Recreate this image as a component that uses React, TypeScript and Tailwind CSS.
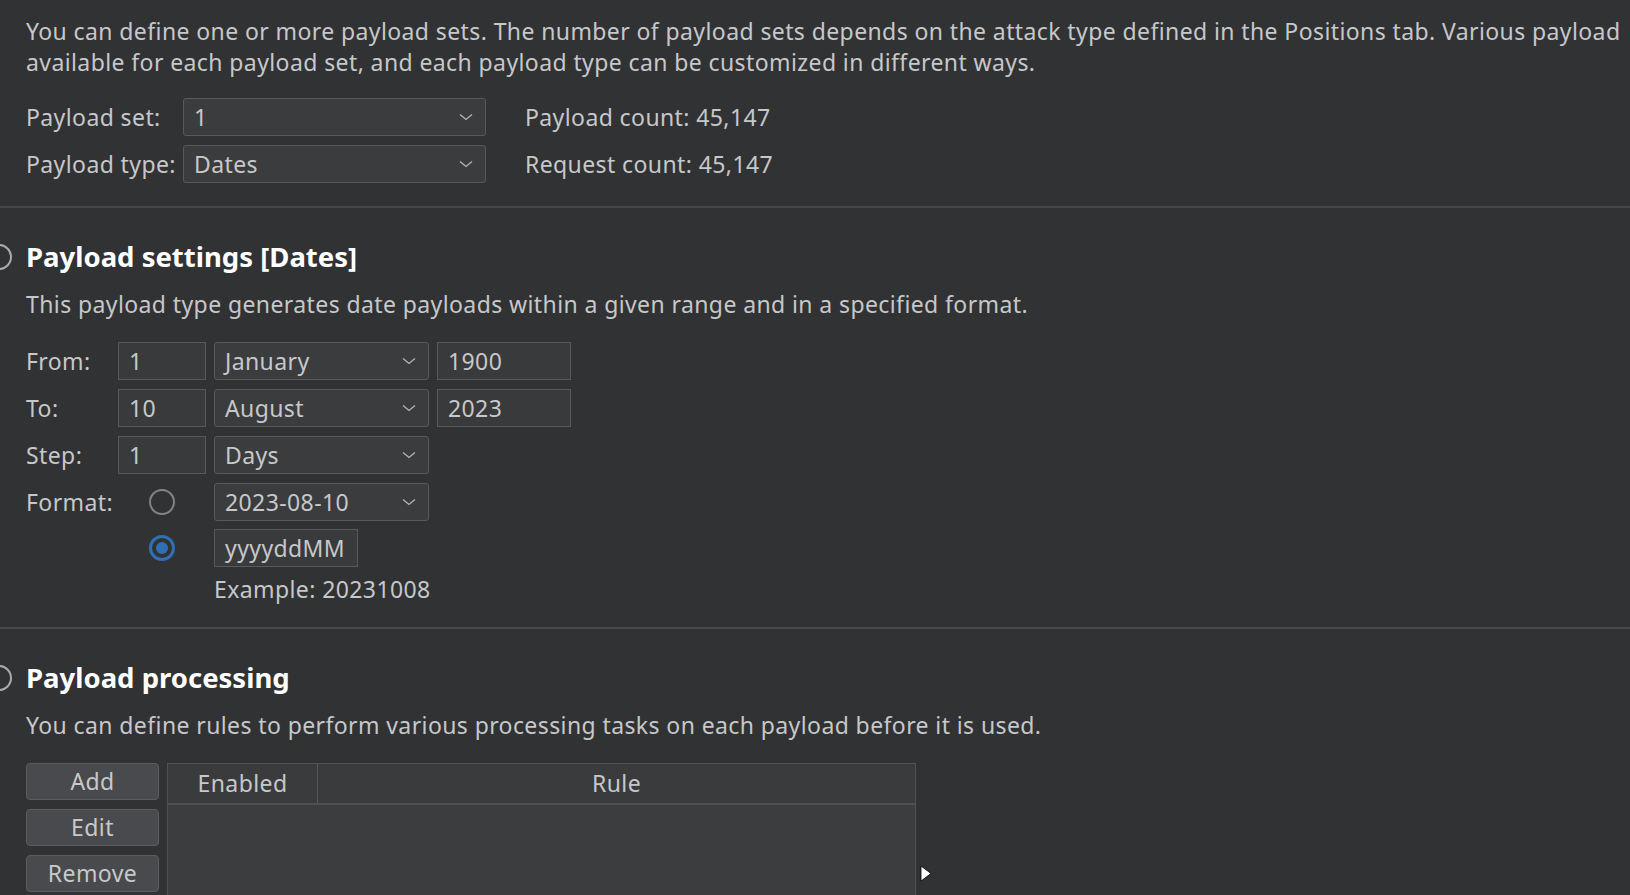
import React from "react";

const font = { fontFamily: '"Noto Sans", "Open Sans", sans-serif' };

function Chevron() {
  return (
    <svg width="14" height="8" viewBox="0 0 14 8" fill="none" className="shrink-0">
      <path d="M1 1.5 L7 6.5 L13 1.5" stroke="#b4b6b8" strokeWidth="1.3" />
    </svg>
  );
}

function Select({ value, width }: { value: string; width: string }) {
  return (
    <div
      className={`flex h-[38px] ${width} items-center justify-between rounded-[3px] border border-[#58595c] bg-[#3b3c3e] pl-[10px] pr-[12px]`}
    >
      <span>{value}</span>
      <Chevron />
    </div>
  );
}

function Field({ value, width }: { value: string; width: string }) {
  return (
    <div className={`flex h-[38px] ${width} items-center border border-[#58595c] bg-[#393a3c] pl-[10px]`}>
      {value}
    </div>
  );
}

function Radio({ checked }: { checked?: boolean }) {
  return checked ? (
    <div className="flex h-[26px] w-[26px] items-center justify-center rounded-full border-[3px] border-[#2f6fb3]">
      <div className="h-[12px] w-[12px] rounded-full bg-[#2f6fb3]" />
    </div>
  ) : (
    <div className="h-[26px] w-[26px] rounded-full border-2 border-[#838486]" />
  );
}

function SectionTitle({ children }: { children: React.ReactNode }) {
  return (
    <div className="flex items-center">
      <div className="-ml-[40px] mr-[14px] h-[26px] w-[26px] shrink-0 rounded-full border-2 border-[#a9abad]" />
      <h2 className="text-[27.5px] font-bold leading-[36px] tracking-normal text-white">{children}</h2>
    </div>
  );
}

function Button({ label }: { label: string }) {
  return (
    <button
      type="button"
      className="flex h-[37px] w-[133px] items-center justify-center rounded-[4px] border border-[#5b5d60] bg-[#484a4d] text-[#c7c9cb]"
    >
      {label}
    </button>
  );
}

export default function App() {
  return (
    <div
      style={font}
      className="relative h-[895px] w-full overflow-hidden bg-[#313234] text-[23px] leading-[31px] tracking-[0.4px] text-[#c6c8ca]"
    >
      {/* payload sets */}
      <section className="pl-[26px] pt-[16px]">
        <p className="whitespace-nowrap">
          You can define one or more payload sets. The number of payload sets depends on the attack type defined in the Positions tab. Various payload
        </p>
        <p className="whitespace-nowrap">
          available for each payload set, and each payload type can be customized in different ways.
        </p>
        <div className="mt-[20px] flex flex-col gap-[9px]">
          <div className="flex items-center">
            <span className="w-[157px]">Payload set:</span>
            <Select value="1" width="w-[303px]" />
            <span className="ml-[39px]">Payload count: 45,147</span>
          </div>
          <div className="flex items-center">
            <span className="w-[157px]">Payload type:</span>
            <Select value="Dates" width="w-[303px]" />
            <span className="ml-[39px]">Request count: 45,147</span>
          </div>
        </div>
      </section>

      <div className="mt-[23px] h-[2px] bg-[#47484b]" />

      {/* payload settings */}
      <section className="pl-[26px] pt-[31px]">
        <SectionTitle>Payload settings [Dates]</SectionTitle>
        <p className="mt-[14px] whitespace-nowrap">
          This payload type generates date payloads within a given range and in a specified format.
        </p>
        <div className="mt-[22px] flex flex-col gap-[9px]">
          <div className="flex items-center gap-[8px]">
            <span className="w-[84px]">From:</span>
            <Field value="1" width="w-[88px]" />
            <Select value="January" width="w-[215px]" />
            <Field value="1900" width="w-[134px]" />
          </div>
          <div className="flex items-center gap-[8px]">
            <span className="w-[84px]">To:</span>
            <Field value="10" width="w-[88px]" />
            <Select value="August" width="w-[215px]" />
            <Field value="2023" width="w-[134px]" />
          </div>
          <div className="flex items-center gap-[8px]">
            <span className="w-[84px]">Step:</span>
            <Field value="1" width="w-[88px]" />
            <Select value="Days" width="w-[215px]" />
          </div>
          <div className="flex items-center gap-[8px]">
            <span className="w-[84px]">Format:</span>
            <div className="flex w-[88px] justify-center">
              <Radio />
            </div>
            <Select value="2023-08-10" width="w-[215px]" />
          </div>
          <div className="-mt-[1px] flex items-center gap-[8px]">
            <span className="w-[84px]" />
            <div className="flex w-[88px] justify-center">
              <Radio checked />
            </div>
            <Field value="yyyyddMM" width="w-[144px]" />
          </div>
        </div>
        <p className="mt-[7px] pl-[188px]">Example: 20231008</p>
      </section>

      <div className="mt-[22px] h-[2px] bg-[#47484b]" />

      {/* payload processing */}
      <section className="pl-[26px] pt-[31px]">
        <SectionTitle>Payload processing</SectionTitle>
        <p className="mt-[14px] whitespace-nowrap">
          You can define rules to perform various processing tasks on each payload before it is used.
        </p>
        <div className="mt-[22px] flex items-start gap-[8px]">
          <div className="flex flex-col gap-[9px]">
            <Button label="Add" />
            <Button label="Edit" />
            <Button label="Remove" />
          </div>
          <div className="h-[160px] w-[749px] border border-[#4f5153] bg-[#3c3d3f]">
            <div className="flex h-[41px] border-b-2 border-[#4d4f51] bg-[#3a3b3d]">
              <div className="flex w-[150px] items-center justify-center border-r border-[#55575a]">Enabled</div>
              <div className="flex flex-1 items-center justify-center">Rule</div>
            </div>
          </div>
        </div>
      </section>

      <svg className="absolute left-[920px] top-[865px]" width="13" height="18" viewBox="0 0 13 18">
        <path d="M1 1 L1 16 L11 8.5 Z" fill="#ffffff" stroke="#000" strokeWidth="0.8" />
      </svg>
    </div>
  );
}
